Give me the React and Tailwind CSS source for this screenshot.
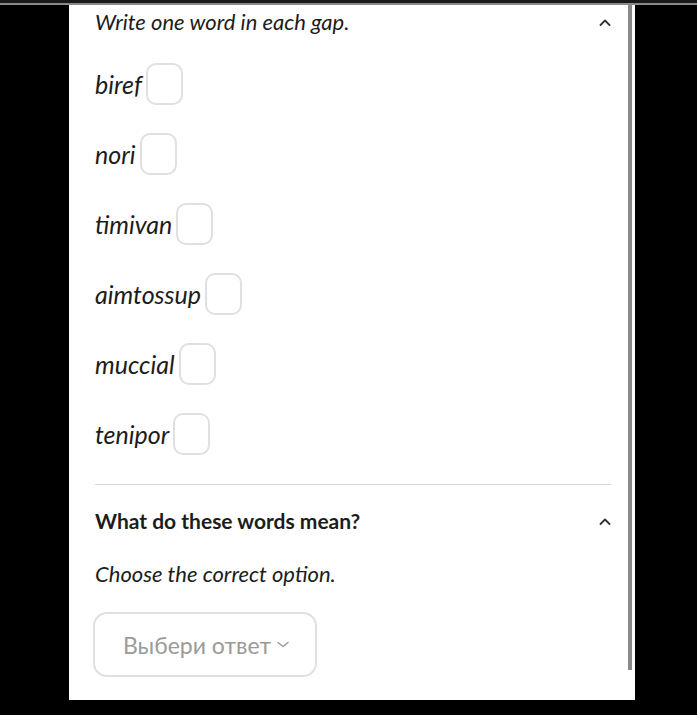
import React from 'react';

const words = ['biref', 'nori', 'timivan', 'aimtossup', 'muccial', 'tenipor'];

function ChevronUp() {
  return (
    <svg width="12" height="7" viewBox="0 0 12 7" fill="none" className="shrink-0">
      <path d="M1.5 6L6 1.5L10.5 6" stroke="#333" strokeWidth="1.8" strokeLinecap="round" strokeLinejoin="round" />
    </svg>
  );
}

export default function App() {
  return (
    <div className="w-[697px] h-[715px] bg-black flex flex-col" style={{ fontFamily: 'Lato, "Open Sans", sans-serif' }}>
      <div className="h-[3px] bg-[#1a1a1a]" />
      <div className="h-[2px] bg-[#8a8a8a]" />
      <div className="flex pl-[69px]">
        <div className="relative w-[566px] h-[695px] bg-white pl-[26px] pr-[24px] pt-[3px] text-[#1c1c1c]">
          {/* Gap task */}
          <div className="flex items-center justify-between h-[28px]">
            <p className="italic text-[22px] leading-[28px]">Write one word in each gap.</p>
            <ChevronUp />
          </div>

          <div className="flex flex-col gap-[28px] mt-[27px]">
            {words.map((w) => (
              <div key={w} className="flex items-center gap-[4px] h-[42px]">
                <span className="italic text-[25px] leading-[30px]">{w}</span>
                <div className="w-[37px] h-[42px] rounded-[10px] border-2 border-[#e0e0e0]" />
              </div>
            ))}
          </div>

          <div className="h-px bg-[#d9d9d9] mt-[29px]" />

          {/* Meaning task */}
          <div className="flex items-center justify-between h-[28px] mt-[22px]">
            <h2 className="font-bold text-[21px] leading-[28px]">What do these words mean?</h2>
            <ChevronUp />
          </div>

          <p className="italic text-[22px] leading-[28px] mt-[25px]">Choose the correct option.</p>

          <button className="mt-[24px] -ml-[2px] w-[224px] h-[65px] rounded-[14px] border-2 border-[#e0e0e0] flex items-center pl-[28px] gap-[6px] text-[#9a9a9a]">
            <span className="text-[23px] leading-[28px]">Выбери ответ</span>
            <svg width="12" height="7" viewBox="0 0 12 7" fill="none">
              <path d="M1 1.5L6 5.5L11 1.5" stroke="#9a9a9a" strokeWidth="1.4" strokeLinecap="round" strokeLinejoin="round" />
            </svg>
          </button>

          {/* scrollbar overlay */}
          <div className="absolute right-[3px] top-0 w-[4px] h-[665px] bg-[#8a8a8a]" />
        </div>
      </div>
    </div>
  );
}
